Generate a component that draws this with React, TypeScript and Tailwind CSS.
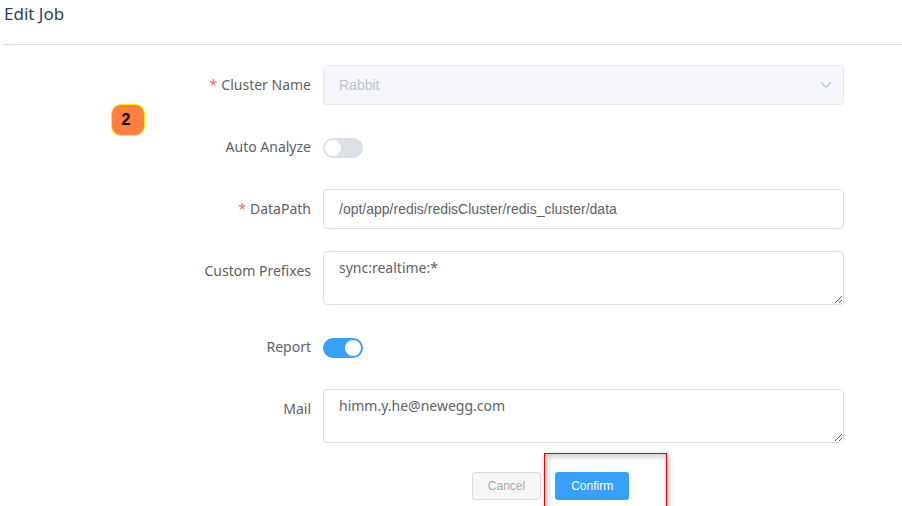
import { useState } from "react";
import type { ReactNode } from "react";

const uiFont = "font-['Noto_Sans','Open_Sans',sans-serif]";
const inputFont = "font-['Liberation_Sans',Arial,sans-serif]";
const fieldBox = "block w-full rounded border px-[15px] text-sm outline-none";

function Row({ id, label, required, children }: { id: string; label: string; required?: boolean; children: ReactNode }) {
  return (
    <div className="grid grid-cols-[307px_1fr] gap-x-3">
      <label htmlFor={id} className="text-right text-sm leading-10 text-[#606266]">
        {required && <span className="mr-1 text-[#f56c6c]">*</span>}
        {label}
      </label>
      <div className="flex min-h-10 items-center">{children}</div>
    </div>
  );
}

function Switch({ id, initial }: { id: string; initial: boolean }) {
  const [on, setOn] = useState(initial);
  return (
    <span className="relative mt-0.5 flex h-5 w-10">
      <input
        id={id}
        type="checkbox"
        role="switch"
        checked={on}
        onChange={() => setOn(!on)}
        className="peer h-5 w-10 appearance-none rounded-full bg-[#dcdfe6] checked:bg-[#37a0f8]"
      />
      <span className="pointer-events-none absolute left-0.5 top-0.5 size-4 rounded-full bg-white peer-checked:left-[22px]" />
    </span>
  );
}

export default function App() {
  return (
    <main className={`${uiFont} bg-white pl-1`}>
      <header className="border-b border-[#dcdfe6] pb-4">
        <h1 className="text-[17px] leading-7 text-[#303f52]">Edit Job</h1>
      </header>
      <form className="relative pt-5" onSubmit={(e) => e.preventDefault()}>
        <div className="flex flex-col gap-[22px] pr-[58px]">
          <Row id="cluster" label="Cluster Name" required>
            <span className="relative block w-full">
              <select
                id="cluster"
                disabled
                className={`${fieldBox} ${inputFont} h-10 appearance-none border-[#e4e7ed] bg-[#f5f7fa] text-[#c0c4cc] opacity-100`}
              >
                <option>Rabbit</option>
              </select>
              <svg viewBox="0 0 12 8" className="pointer-events-none absolute right-3 top-4 h-2 w-3" fill="none" stroke="#c0c4cc" strokeWidth="1.4">
                <path d="M1 1.2 6 6.2 11 1.2" />
              </svg>
            </span>
          </Row>
          <Row id="auto" label="Auto Analyze">
            <Switch id="auto" initial={false} />
          </Row>
          <Row id="path" label="DataPath" required>
            <input
              id="path"
              type="text"
              defaultValue="/opt/app/redis/redisCluster/redis_cluster/data"
              className={`${fieldBox} ${inputFont} h-10 border-[#dcdfe6] text-[#606266]`}
            />
          </Row>
          <Row id="prefixes" label="Custom Prefixes">
            <textarea
              id="prefixes"
              defaultValue="sync:realtime:*"
              className={`${fieldBox} h-[54px] resize-y border-[#dcdfe6] py-[5px] leading-[21px] text-[#606266]`}
            />
          </Row>
          <Row id="report" label="Report">
            <Switch id="report" initial />
          </Row>
          <Row id="mail" label="Mail">
            <textarea
              id="mail"
              defaultValue="himm.y.he@newegg.com"
              className={`${fieldBox} h-[54px] resize-y border-[#dcdfe6] py-[5px] leading-[21px] text-[#606266]`}
            />
          </Row>
        </div>
        <div className={`${inputFont} relative flex justify-center gap-3.5 overflow-hidden pb-1.5 pl-[195px] pt-[29px] text-xs`}>
          <button type="button" className="h-7 rounded-[3px] border border-[#dcdcdc] bg-[#f7f7f7] px-[15px] text-[#aaaaaa]">
            Cancel
          </button>
          <span className="relative">
            <button type="submit" className="h-7 rounded-[3px] bg-[#37a0f8] px-4 text-white">
              Confirm
            </button>
            <span className="pointer-events-none absolute -left-[11px] -top-[19px] h-20 w-[123px] border border-[#f00000] shadow-[2px_2px_6px_rgba(0,0,0,0.25),inset_2px_2px_6px_rgba(0,0,0,0.25)]" />
          </span>
        </div>
        <span className="absolute left-[107px] top-[59px] flex h-8 w-[34px] items-center justify-center rounded-[10px] border border-[#ffee00] bg-[#ff8040] pr-1 font-['Liberation_Sans',Arial,sans-serif] text-base font-bold text-black">
          2
        </span>
      </form>
    </main>
  );
}
